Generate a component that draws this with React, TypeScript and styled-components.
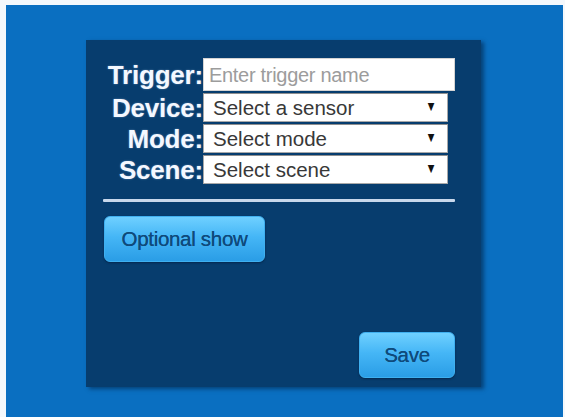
import React from "react";
import styled, { createGlobalStyle } from "styled-components";

const Global = createGlobalStyle`
  html, body { margin: 0; padding: 0; background: #f4f8fc; }
  body { font-family: "Liberation Sans", Arial, sans-serif; }
  * { box-sizing: border-box; }
`;

const Screen = styled.div`
  margin: 5px 2px 0 6px;
  height: 412px;
  background: #0a6fc1;
  padding: 35px 0 0 80px;
`;

const Panel = styled.div`
  width: 395px;
  height: 347px;
  background: #073d6e;
  box-shadow: 3px 2px 4px rgba(2, 30, 60, 0.55);
  padding: 18px 26px 9px 17px;
  display: flex;
  flex-direction: column;
`;

const Form = styled.div`
  display: grid;
  grid-template-columns: 100px auto;
  row-gap: 2px;
  align-items: center;
  justify-items: start;
`;

const Label = styled.label`
  justify-self: end;
  color: #f4f8ff;
  font-weight: bold;
  font-size: 26px;
  line-height: 1;
  letter-spacing: -0.2px;
  text-shadow: 0 0 2px rgba(200, 225, 255, 0.45);
`;

const TextInput = styled.input`
  width: 252px;
  height: 33px;
  border: 1px solid #d4d4d4;
  background: #fff;
  font-family: "Liberation Sans", Arial, sans-serif;
  font-size: 20px;
  padding: 2px 4px 0 5px;
  outline: none;
  &::placeholder { color: #9c9c9c; letter-spacing: -0.3px; }
`;

const SelectBox = styled.div`
  width: 245px;
  height: 29px;
  background: #fff;
  border: 1px solid #a8a8a8;
  border-top-color: #8e8e8e;
  display: flex;
  align-items: center;
  justify-content: space-between;
  padding: 1px 9px 0 9px;
  font-size: 20.5px;
  color: #383838;
`;

const Arrow = styled.span`
  font-size: 14px;
  color: #111;
  transform: scaleX(0.8);
  margin-bottom: 4px;
`;

const Divider = styled.div`
  height: 3px;
  margin: 15px 0 14px 0;
  width: 352px;
  background: #c8d8ec;
  border-radius: 1px;
`;

const Button = styled.button<{ $w: number }>`
  width: ${(p) => p.$w}px;
  height: 46px;
  border: 1px solid #3fb0f0;
  border-radius: 6px;
  background: linear-gradient(#6fd0ff 0%, #45b6f6 45%, #2a9de6 100%);
  box-shadow: 0 1px 2px rgba(0, 20, 50, 0.5);
  color: #0f4a7b;
  font-family: "Liberation Sans", Arial, sans-serif;
  font-size: 20.5px;
  letter-spacing: -0.3px;
  text-shadow: 0 0 0.6px #0f4a7b;
  padding: 0;
  cursor: pointer;
`;

const OptionalButton = styled(Button)`
  margin-left: 1px;
  align-self: flex-start;
`;

const SaveButton = styled(Button)`
  margin-top: auto;
  align-self: flex-end;
`;

const selects = [
  { label: "Device:", value: "Select a sensor" },
  { label: "Mode:", value: "Select mode" },
  { label: "Scene:", value: "Select scene" },
];

export default function App() {
  return (
    <>
      <Global />
      <Screen>
        <Panel>
          <Form>
            <Label>Trigger:</Label>
            <TextInput placeholder="Enter trigger name" />
            {selects.map((s) => (
              <React.Fragment key={s.label}>
                <Label>{s.label}</Label>
                <SelectBox>
                  <span>{s.value}</span>
                  <Arrow>▼</Arrow>
                </SelectBox>
              </React.Fragment>
            ))}
          </Form>
          <Divider />
          <OptionalButton $w={161}>Optional show</OptionalButton>
          <SaveButton $w={96}>Save</SaveButton>
        </Panel>
      </Screen>
    </>
  );
}
